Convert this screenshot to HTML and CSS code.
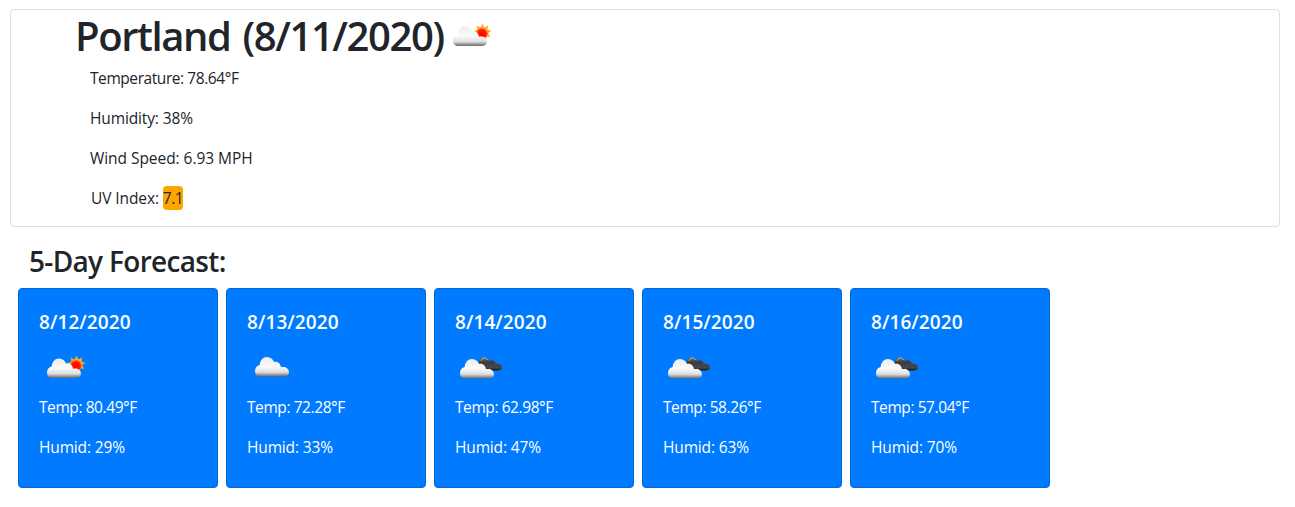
FILE: index.html
```html
<!DOCTYPE html>
<html lang="en">
<head>
<meta charset="utf-8">
<title>Weather Dashboard</title>
<link rel="stylesheet" href="styles.css">
</head>
<body>
<svg class="defs" width="0" height="0" aria-hidden="true">
  <defs>
    <linearGradient id="white" x1="0" y1="0" x2="0" y2="1">
      <stop offset="0" stop-color="#ececec"/><stop offset=".5" stop-color="#fbfbfb"/><stop offset=".78" stop-color="#dedede"/><stop offset=".9" stop-color="#a0a0a0"/><stop offset="1" stop-color="#686868"/>
    </linearGradient>
    <linearGradient id="dark" x1="0" y1="0" x2="0" y2="1">
      <stop offset="0" stop-color="#777"/><stop offset=".35" stop-color="#3c3c3c"/><stop offset=".8" stop-color="#484848"/><stop offset="1" stop-color="#111"/>
    </linearGradient>
    <radialGradient id="sun" cx=".45" cy=".62" r=".6"><stop offset="0" stop-color="#f00"/><stop offset=".6" stop-color="#ff1c00"/><stop offset=".8" stop-color="#ff8c13"/><stop offset="1" stop-color="#ffb347"/></radialGradient>
    <path id="cloud" transform="scale(1 1.08)" d="M5 18C2 18 0 16 0 12.900C0 10 2 8 4.700 7.500C5 3 8 0 12 0C15.500 0 18 2 19 4.700C22.500 3.500 25.500 6 26 9.500C30 8.500 34 10.500 34 14C34 16.500 32 18 29.500 18Z"/>
    <symbol id="few" viewBox="0 0 50 50">
      <g transform="translate(37.500 22.500)">
        <path fill="#ffa62b" d="M0-9L1.600-5.500H-1.600ZM5.800-6.900L5.100-3.200 2.600-5.200ZM8.900-1.600L5.700.3 5.200-2.900ZM7.800 4.500L4.200 3.700 5.900 1ZM3.100 8.400L.8 5.600 3.800 4.400ZM-5.800-6.900L-2.600-5.200-5.100-3.200ZM-9-1L-5.200-2.900-5.700.3Z"/>
        <circle r="6" fill="url(#sun)"/>
      </g>
      <use href="#cloud" x="8" y="16.500" fill="url(#white)"/>
    </symbol>
    <symbol id="scattered" viewBox="0 0 50 50"><use href="#cloud" x="8" y="15" fill="url(#white)"/></symbol>
    <symbol id="broken" viewBox="0 0 50 50">
      <path fill="url(#dark)" d="M24 22C23 17 27 14.500 30 15.500C32 16 33 17.500 33.500 19C36 16.500 40 18 40.500 21.500C44 21 47 22.500 47 25.500C47 27.500 45 28.500 43 28.500H28Z"/>
      <path fill="none" stroke="#aaa" stroke-width="1" d="M26 19C27 15.500 30.500 15 32.500 18"/>
      <use href="#cloud" x="5" y="17" fill="url(#white)"/>
    </symbol>
  </defs>
</svg>
<section class="current">
  <h1 class="city"><span class="city-name"><span class="place">Portland</span> <span class="today">(8/11/2020)</span></span><svg class="icon"><use href="#few"/></svg></h1>
  <p class="detail temperature">Temperature: 78.64°F</p>
  <p class="detail humidity">Humidity: 38%</p>
  <p class="detail wind">Wind Speed: 6.93 MPH</p>
  <p class="detail uv">UV Index: <span class="badge">7.1</span></p>
</section>
<h2 class="heading">5-Day Forecast:</h2>
<main class="forecast">
  <article class="day"><h3 class="date">8/12/2020</h3><svg class="icon"><use href="#few"/></svg><p class="temp">Temp: 80.49°F</p><p class="humid">Humid: 29%</p></article>
  <article class="day"><h3 class="date">8/13/2020</h3><svg class="icon"><use href="#scattered"/></svg><p class="temp">Temp: 72.28°F</p><p class="humid">Humid: 33%</p></article>
  <article class="day"><h3 class="date">8/14/2020</h3><svg class="icon"><use href="#broken"/></svg><p class="temp">Temp: 62.98°F</p><p class="humid">Humid: 47%</p></article>
  <article class="day"><h3 class="date">8/15/2020</h3><svg class="icon"><use href="#broken"/></svg><p class="temp">Temp: 58.26°F</p><p class="humid">Humid: 63%</p></article>
  <article class="day"><h3 class="date">8/16/2020</h3><svg class="icon"><use href="#broken"/></svg><p class="temp">Temp: 57.04°F</p><p class="humid">Humid: 70%</p></article>
</main>
</body>
</html>
```
FILE: styles.css
```css
* { box-sizing: border-box; }
body { margin: 0; padding: 9px 15px 0 10px; background: #fff; color: #212529; font: 16px/24px "Open Sans", "Noto Sans", sans-serif; }
h1, h2, h3, p { margin: 0; }
.defs { display: block; height: 0; }
.icon { display: block; width: 50px; height: 50px; flex: none; }
.current { height: 218px; border: 1px solid #dfdfdf; border-radius: 4px; padding-left: 64px; }
.city { display: flex; align-items: center; height: 50px; font-size: 40px; font-weight: 550; line-height: 48px; margin-bottom: 6px; }
.city-name { width: 370px; padding-top: 2px; white-space: nowrap; word-spacing: 1.500px; }
.place { letter-spacing: -1.4px; }
.today { letter-spacing: -1.4px; }
.detail { padding-left: 15px; margin-bottom: 16px; font-size: 15.500px; font-weight: 380; letter-spacing: -.43px; white-space: nowrap; }
.humidity { letter-spacing: -.13px; }
.wind { letter-spacing: -.05px; }
.uv { padding-left: 16px; letter-spacing: -.1px; }
.badge { display: inline-block; width: 20px; height: 24px; background: orange; border-radius: 4px; letter-spacing: -.5px; }
.heading { margin: 18px 0 10px 19px; font-size: 28px; line-height: 33px; font-weight: 550; letter-spacing: -.67px; }
.forecast { display: flex; gap: 8px; padding-left: 8px; }
.day { width: 200px; height: 200px; padding: 20px; border: 1px solid #0069d9; border-radius: 4px; background: #007bff; color: #fff; font-size: 15.500px; letter-spacing: -.42px; white-space: nowrap; }
.date { height: 33px; font-size: 19px; line-height: 26px; font-weight: 600; letter-spacing: .08px; }
.temp { margin: 3px 0 16px; }
.humid { letter-spacing: -.15px; }
```
